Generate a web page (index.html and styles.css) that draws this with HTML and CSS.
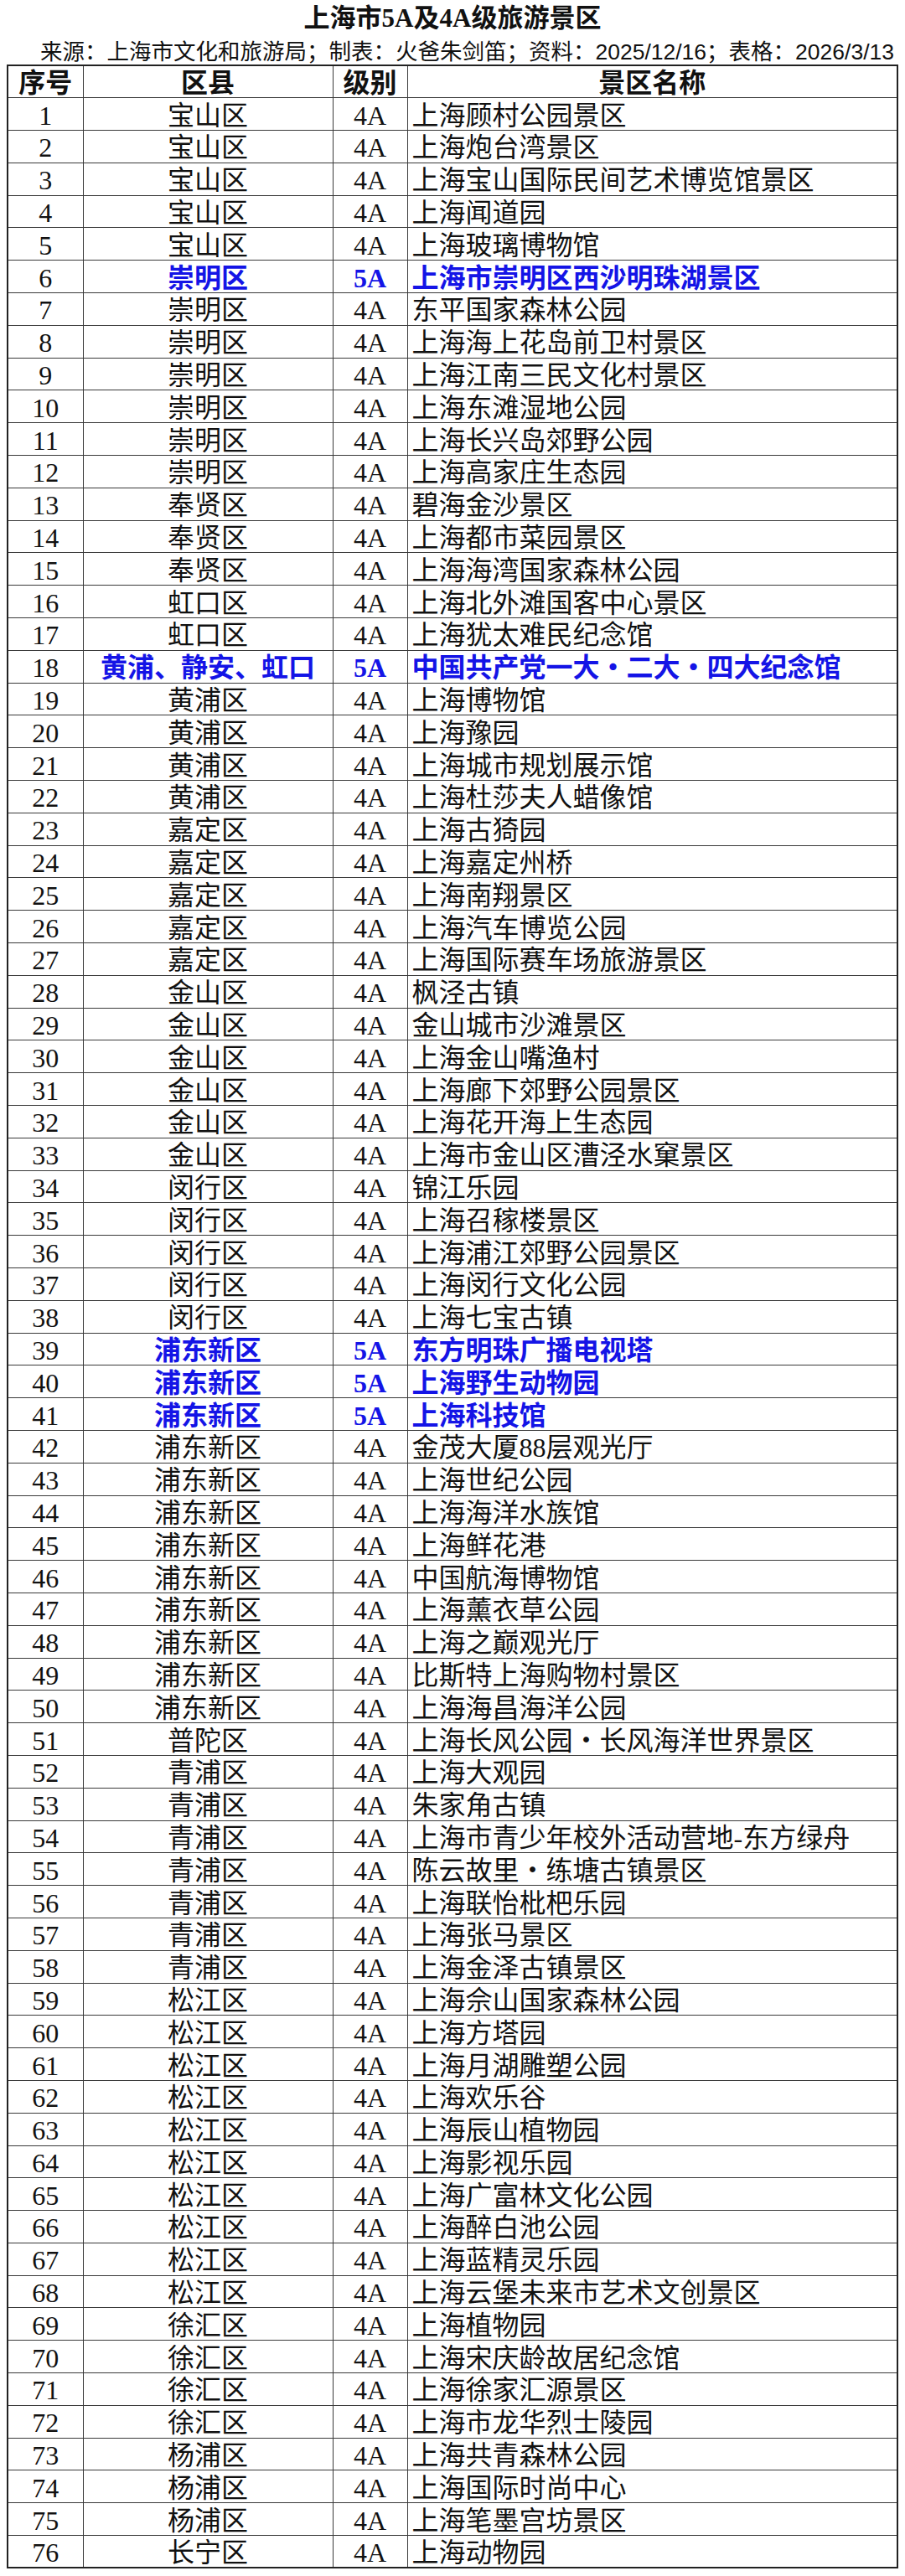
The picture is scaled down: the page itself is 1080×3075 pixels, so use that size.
FILE: index.html
```html
<!DOCTYPE html>
<html lang="zh-CN">
<head>
<meta charset="utf-8">
<title>上海市5A及4A级旅游景区</title>
<link rel="stylesheet" href="styles.css">
</head>
<body>
<h1 class="title">上海市5A及4A级旅游景区</h1>
<p class="source">来源：上海市文化和旅游局；制表：火爸朱剑笛；资料：2025/12/16；表格：2026/3/13</p>
<table class="list">
<colgroup><col class="c-num"><col class="c-dist"><col class="c-lvl"><col class="c-name"></colgroup>
<thead>
<tr><th>序号</th><th>区县</th><th>级别</th><th>景区名称</th></tr>
</thead>
<tbody>
<tr><td class="num">1</td><td class="dist">宝山区</td><td class="lvl">4A</td><td class="name">上海顾村公园景区</td></tr>
<tr><td class="num">2</td><td class="dist">宝山区</td><td class="lvl">4A</td><td class="name">上海炮台湾景区</td></tr>
<tr><td class="num">3</td><td class="dist">宝山区</td><td class="lvl">4A</td><td class="name">上海宝山国际民间艺术博览馆景区</td></tr>
<tr><td class="num">4</td><td class="dist">宝山区</td><td class="lvl">4A</td><td class="name">上海闻道园</td></tr>
<tr><td class="num">5</td><td class="dist">宝山区</td><td class="lvl">4A</td><td class="name">上海玻璃博物馆</td></tr>
<tr class="hl"><td class="num">6</td><td class="dist">崇明区</td><td class="lvl">5A</td><td class="name">上海市崇明区西沙明珠湖景区</td></tr>
<tr><td class="num">7</td><td class="dist">崇明区</td><td class="lvl">4A</td><td class="name">东平国家森林公园</td></tr>
<tr><td class="num">8</td><td class="dist">崇明区</td><td class="lvl">4A</td><td class="name">上海海上花岛前卫村景区</td></tr>
<tr><td class="num">9</td><td class="dist">崇明区</td><td class="lvl">4A</td><td class="name">上海江南三民文化村景区</td></tr>
<tr><td class="num">10</td><td class="dist">崇明区</td><td class="lvl">4A</td><td class="name">上海东滩湿地公园</td></tr>
<tr><td class="num">11</td><td class="dist">崇明区</td><td class="lvl">4A</td><td class="name">上海长兴岛郊野公园</td></tr>
<tr><td class="num">12</td><td class="dist">崇明区</td><td class="lvl">4A</td><td class="name">上海高家庄生态园</td></tr>
<tr><td class="num">13</td><td class="dist">奉贤区</td><td class="lvl">4A</td><td class="name">碧海金沙景区</td></tr>
<tr><td class="num">14</td><td class="dist">奉贤区</td><td class="lvl">4A</td><td class="name">上海都市菜园景区</td></tr>
<tr><td class="num">15</td><td class="dist">奉贤区</td><td class="lvl">4A</td><td class="name">上海海湾国家森林公园</td></tr>
<tr><td class="num">16</td><td class="dist">虹口区</td><td class="lvl">4A</td><td class="name">上海北外滩国客中心景区</td></tr>
<tr><td class="num">17</td><td class="dist">虹口区</td><td class="lvl">4A</td><td class="name">上海犹太难民纪念馆</td></tr>
<tr class="hl"><td class="num">18</td><td class="dist">黄浦、静安、虹口</td><td class="lvl">5A</td><td class="name">中国共产党一大・二大・四大纪念馆</td></tr>
<tr><td class="num">19</td><td class="dist">黄浦区</td><td class="lvl">4A</td><td class="name">上海博物馆</td></tr>
<tr><td class="num">20</td><td class="dist">黄浦区</td><td class="lvl">4A</td><td class="name">上海豫园</td></tr>
<tr><td class="num">21</td><td class="dist">黄浦区</td><td class="lvl">4A</td><td class="name">上海城市规划展示馆</td></tr>
<tr><td class="num">22</td><td class="dist">黄浦区</td><td class="lvl">4A</td><td class="name">上海杜莎夫人蜡像馆</td></tr>
<tr><td class="num">23</td><td class="dist">嘉定区</td><td class="lvl">4A</td><td class="name">上海古猗园</td></tr>
<tr><td class="num">24</td><td class="dist">嘉定区</td><td class="lvl">4A</td><td class="name">上海嘉定州桥</td></tr>
<tr><td class="num">25</td><td class="dist">嘉定区</td><td class="lvl">4A</td><td class="name">上海南翔景区</td></tr>
<tr><td class="num">26</td><td class="dist">嘉定区</td><td class="lvl">4A</td><td class="name">上海汽车博览公园</td></tr>
<tr><td class="num">27</td><td class="dist">嘉定区</td><td class="lvl">4A</td><td class="name">上海国际赛车场旅游景区</td></tr>
<tr><td class="num">28</td><td class="dist">金山区</td><td class="lvl">4A</td><td class="name">枫泾古镇</td></tr>
<tr><td class="num">29</td><td class="dist">金山区</td><td class="lvl">4A</td><td class="name">金山城市沙滩景区</td></tr>
<tr><td class="num">30</td><td class="dist">金山区</td><td class="lvl">4A</td><td class="name">上海金山嘴渔村</td></tr>
<tr><td class="num">31</td><td class="dist">金山区</td><td class="lvl">4A</td><td class="name">上海廊下郊野公园景区</td></tr>
<tr><td class="num">32</td><td class="dist">金山区</td><td class="lvl">4A</td><td class="name">上海花开海上生态园</td></tr>
<tr><td class="num">33</td><td class="dist">金山区</td><td class="lvl">4A</td><td class="name">上海市金山区漕泾水窠景区</td></tr>
<tr><td class="num">34</td><td class="dist">闵行区</td><td class="lvl">4A</td><td class="name">锦江乐园</td></tr>
<tr><td class="num">35</td><td class="dist">闵行区</td><td class="lvl">4A</td><td class="name">上海召稼楼景区</td></tr>
<tr><td class="num">36</td><td class="dist">闵行区</td><td class="lvl">4A</td><td class="name">上海浦江郊野公园景区</td></tr>
<tr><td class="num">37</td><td class="dist">闵行区</td><td class="lvl">4A</td><td class="name">上海闵行文化公园</td></tr>
<tr><td class="num">38</td><td class="dist">闵行区</td><td class="lvl">4A</td><td class="name">上海七宝古镇</td></tr>
<tr class="hl"><td class="num">39</td><td class="dist">浦东新区</td><td class="lvl">5A</td><td class="name">东方明珠广播电视塔</td></tr>
<tr class="hl"><td class="num">40</td><td class="dist">浦东新区</td><td class="lvl">5A</td><td class="name">上海野生动物园</td></tr>
<tr class="hl"><td class="num">41</td><td class="dist">浦东新区</td><td class="lvl">5A</td><td class="name">上海科技馆</td></tr>
<tr><td class="num">42</td><td class="dist">浦东新区</td><td class="lvl">4A</td><td class="name">金茂大厦88层观光厅</td></tr>
<tr><td class="num">43</td><td class="dist">浦东新区</td><td class="lvl">4A</td><td class="name">上海世纪公园</td></tr>
<tr><td class="num">44</td><td class="dist">浦东新区</td><td class="lvl">4A</td><td class="name">上海海洋水族馆</td></tr>
<tr><td class="num">45</td><td class="dist">浦东新区</td><td class="lvl">4A</td><td class="name">上海鲜花港</td></tr>
<tr><td class="num">46</td><td class="dist">浦东新区</td><td class="lvl">4A</td><td class="name">中国航海博物馆</td></tr>
<tr><td class="num">47</td><td class="dist">浦东新区</td><td class="lvl">4A</td><td class="name">上海薰衣草公园</td></tr>
<tr><td class="num">48</td><td class="dist">浦东新区</td><td class="lvl">4A</td><td class="name">上海之巅观光厅</td></tr>
<tr><td class="num">49</td><td class="dist">浦东新区</td><td class="lvl">4A</td><td class="name">比斯特上海购物村景区</td></tr>
<tr><td class="num">50</td><td class="dist">浦东新区</td><td class="lvl">4A</td><td class="name">上海海昌海洋公园</td></tr>
<tr><td class="num">51</td><td class="dist">普陀区</td><td class="lvl">4A</td><td class="name">上海长风公园・长风海洋世界景区</td></tr>
<tr><td class="num">52</td><td class="dist">青浦区</td><td class="lvl">4A</td><td class="name">上海大观园</td></tr>
<tr><td class="num">53</td><td class="dist">青浦区</td><td class="lvl">4A</td><td class="name">朱家角古镇</td></tr>
<tr><td class="num">54</td><td class="dist">青浦区</td><td class="lvl">4A</td><td class="name">上海市青少年校外活动营地-东方绿舟</td></tr>
<tr><td class="num">55</td><td class="dist">青浦区</td><td class="lvl">4A</td><td class="name">陈云故里・练塘古镇景区</td></tr>
<tr><td class="num">56</td><td class="dist">青浦区</td><td class="lvl">4A</td><td class="name">上海联怡枇杷乐园</td></tr>
<tr><td class="num">57</td><td class="dist">青浦区</td><td class="lvl">4A</td><td class="name">上海张马景区</td></tr>
<tr><td class="num">58</td><td class="dist">青浦区</td><td class="lvl">4A</td><td class="name">上海金泽古镇景区</td></tr>
<tr><td class="num">59</td><td class="dist">松江区</td><td class="lvl">4A</td><td class="name">上海佘山国家森林公园</td></tr>
<tr><td class="num">60</td><td class="dist">松江区</td><td class="lvl">4A</td><td class="name">上海方塔园</td></tr>
<tr><td class="num">61</td><td class="dist">松江区</td><td class="lvl">4A</td><td class="name">上海月湖雕塑公园</td></tr>
<tr><td class="num">62</td><td class="dist">松江区</td><td class="lvl">4A</td><td class="name">上海欢乐谷</td></tr>
<tr><td class="num">63</td><td class="dist">松江区</td><td class="lvl">4A</td><td class="name">上海辰山植物园</td></tr>
<tr><td class="num">64</td><td class="dist">松江区</td><td class="lvl">4A</td><td class="name">上海影视乐园</td></tr>
<tr><td class="num">65</td><td class="dist">松江区</td><td class="lvl">4A</td><td class="name">上海广富林文化公园</td></tr>
<tr><td class="num">66</td><td class="dist">松江区</td><td class="lvl">4A</td><td class="name">上海醉白池公园</td></tr>
<tr><td class="num">67</td><td class="dist">松江区</td><td class="lvl">4A</td><td class="name">上海蓝精灵乐园</td></tr>
<tr><td class="num">68</td><td class="dist">松江区</td><td class="lvl">4A</td><td class="name">上海云堡未来市艺术文创景区</td></tr>
<tr><td class="num">69</td><td class="dist">徐汇区</td><td class="lvl">4A</td><td class="name">上海植物园</td></tr>
<tr><td class="num">70</td><td class="dist">徐汇区</td><td class="lvl">4A</td><td class="name">上海宋庆龄故居纪念馆</td></tr>
<tr><td class="num">71</td><td class="dist">徐汇区</td><td class="lvl">4A</td><td class="name">上海徐家汇源景区</td></tr>
<tr><td class="num">72</td><td class="dist">徐汇区</td><td class="lvl">4A</td><td class="name">上海市龙华烈士陵园</td></tr>
<tr><td class="num">73</td><td class="dist">杨浦区</td><td class="lvl">4A</td><td class="name">上海共青森林公园</td></tr>
<tr><td class="num">74</td><td class="dist">杨浦区</td><td class="lvl">4A</td><td class="name">上海国际时尚中心</td></tr>
<tr><td class="num">75</td><td class="dist">杨浦区</td><td class="lvl">4A</td><td class="name">上海笔墨宫坊景区</td></tr>
<tr><td class="num">76</td><td class="dist">长宁区</td><td class="lvl">4A</td><td class="name">上海动物园</td></tr>
</tbody>
</table>
</body>
</html>
```

FILE: styles.css
```css
html, body {
  background: #ffffff;
}

body {
  margin: 0 8px;
  color: #111111;
  font-family: "Liberation Serif", "Noto Sans CJK SC", serif;
}

.title {
  margin: 0;
  font-size: 31px;
  font-weight: bold;
  line-height: 44px;
  text-align: center;
}

.source {
  margin: 3px 0 0;
  padding-right: 5px;
  font-family: "Liberation Sans", "Noto Sans CJK SC", sans-serif;
  font-size: 26.5px;
  line-height: 30px;
  text-align: right;
  white-space: nowrap;
}

.list {
  width: 1064px;
  border-collapse: collapse;
  table-layout: fixed;
  border: 2px solid #222222;
}

.c-num { width: 90px; }
.c-dist { width: 298px; }
.c-lvl { width: 89px; }
.c-name { width: auto; }

.list tr {
  height: 38.8px;
}

.list th,
.list td {
  border: 1px solid #3a3a3a;
  padding: 3px 5px 0;
  font-size: 32px;
  line-height: 34px;
  vertical-align: middle;
  white-space: nowrap;
  overflow: hidden;
}

.list th {
  font-weight: bold;
  text-align: center;
}

.num,
.dist,
.lvl {
  text-align: center;
}

.name {
  text-align: left;
}

.hl .dist,
.hl .lvl,
.hl .name {
  color: #1414e6;
  font-weight: bold;
}
```
